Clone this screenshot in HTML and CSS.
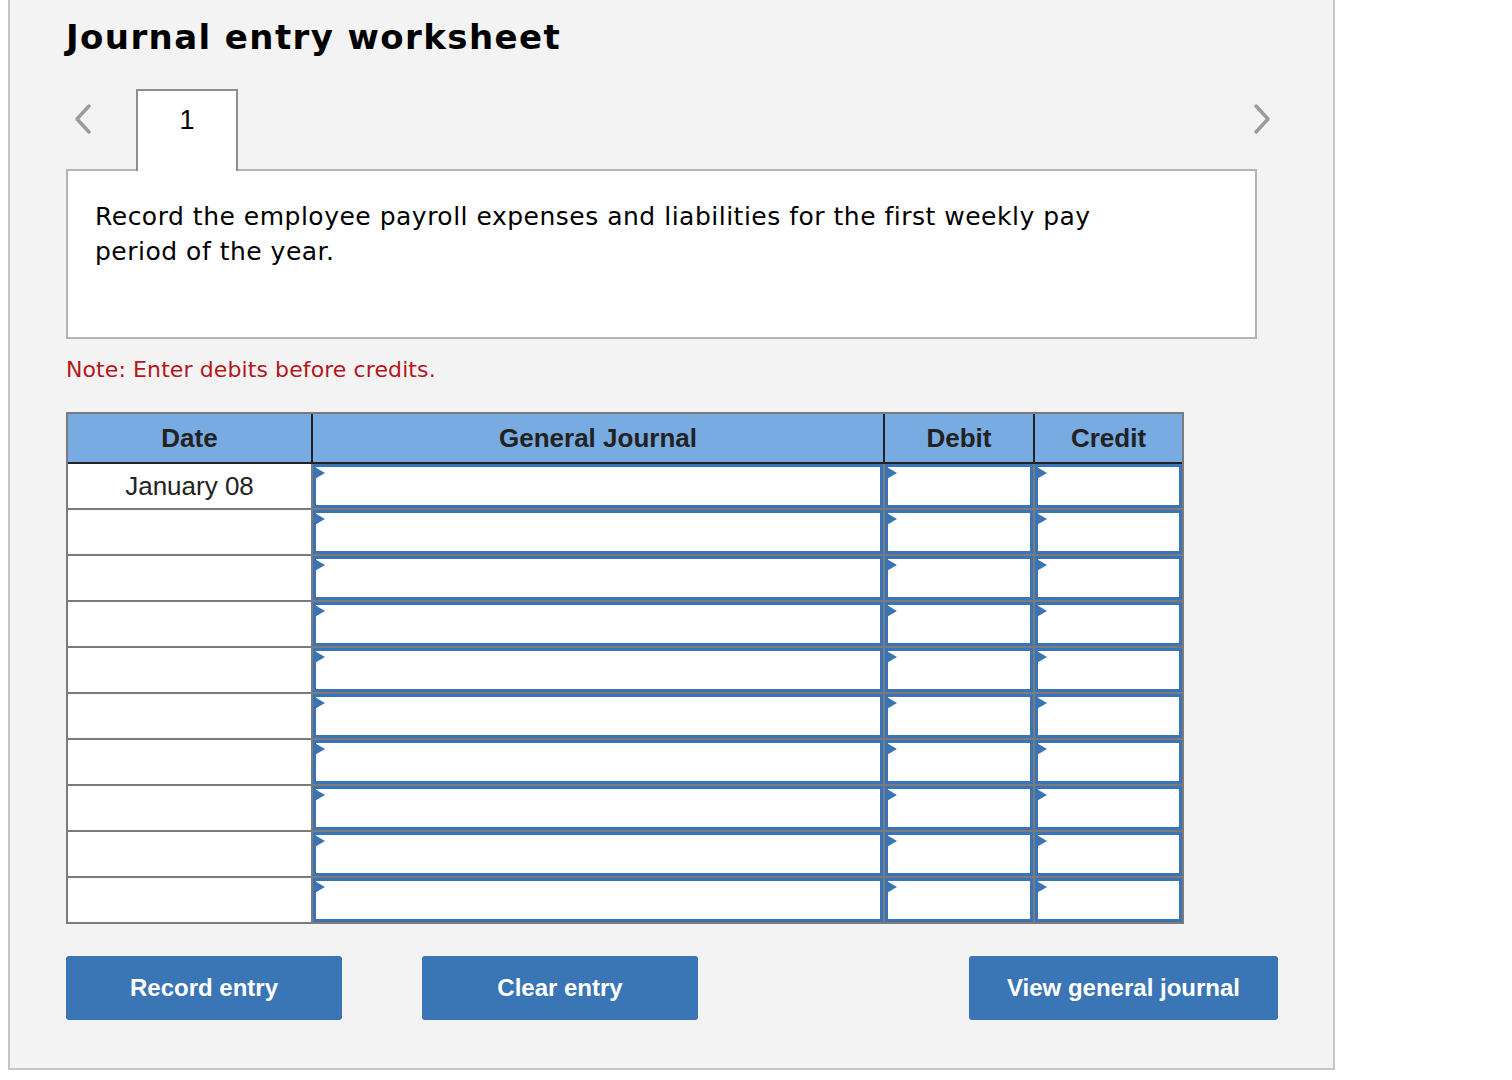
FILE: index.html
```html
<!DOCTYPE html>
<html lang="en">
<head>
<meta charset="utf-8">
<title>Journal entry worksheet</title>
<link rel="stylesheet" href="styles.css">
</head>
<body>
<div class="page">
  <h1 class="title">Journal entry worksheet</h1>
  <div class="nav">
    <div class="arrow arrow-left">
      <svg width="20" height="32" viewBox="0 0 20 32"><path d="M16 3 L4 16 L16 29" fill="none" stroke="#9b9b9b" stroke-width="3.5" stroke-linecap="round" stroke-linejoin="round"/></svg>
    </div>
    <div class="tab">1</div>
    <div class="arrow arrow-right">
      <svg width="20" height="32" viewBox="0 0 20 32"><path d="M4 3 L16 16 L4 29" fill="none" stroke="#9b9b9b" stroke-width="3.5" stroke-linecap="round" stroke-linejoin="round"/></svg>
    </div>
  </div>
  <div class="prompt">
    <p>Record the employee payroll expenses and liabilities for the first weekly pay period of the year.</p>
  </div>
  <p class="note">Note: Enter debits before credits.</p>
  <div class="journal">
    <div class="jhead">
      <div class="hcell">Date</div>
      <div class="hcell">General Journal</div>
      <div class="hcell">Debit</div>
      <div class="hcell">Credit</div>
    </div>
    <div class="jbody">
      <div class="dcell">January 08</div><div class="icell"><div class="field"></div></div><div class="icell"><div class="field"></div></div><div class="icell"><div class="field"></div></div>
      <div class="dcell"></div><div class="icell"><div class="field"></div></div><div class="icell"><div class="field"></div></div><div class="icell"><div class="field"></div></div>
      <div class="dcell"></div><div class="icell"><div class="field"></div></div><div class="icell"><div class="field"></div></div><div class="icell"><div class="field"></div></div>
      <div class="dcell"></div><div class="icell"><div class="field"></div></div><div class="icell"><div class="field"></div></div><div class="icell"><div class="field"></div></div>
      <div class="dcell"></div><div class="icell"><div class="field"></div></div><div class="icell"><div class="field"></div></div><div class="icell"><div class="field"></div></div>
      <div class="dcell"></div><div class="icell"><div class="field"></div></div><div class="icell"><div class="field"></div></div><div class="icell"><div class="field"></div></div>
      <div class="dcell"></div><div class="icell"><div class="field"></div></div><div class="icell"><div class="field"></div></div><div class="icell"><div class="field"></div></div>
      <div class="dcell"></div><div class="icell"><div class="field"></div></div><div class="icell"><div class="field"></div></div><div class="icell"><div class="field"></div></div>
      <div class="dcell"></div><div class="icell"><div class="field"></div></div><div class="icell"><div class="field"></div></div><div class="icell"><div class="field"></div></div>
      <div class="dcell"></div><div class="icell"><div class="field"></div></div><div class="icell"><div class="field"></div></div><div class="icell"><div class="field"></div></div>
    </div>
  </div>
  <div class="actions">
    <button class="btn btn-record">Record entry</button>
    <button class="btn btn-clear">Clear entry</button>
    <button class="btn btn-view">View general journal</button>
  </div>
</div>
</body>
</html>
```
FILE: styles.css
```css
html, body {
  margin: 0;
  padding: 0;
  background: #ffffff;
}
.page {
  margin-left: 8px;
  width: 1267px;
  background: #f3f3f3;
  border: 2px solid #c6c6c6;
  border-top: none;
  padding: 0 0 48px 56px;
  font-family: "DejaVu Sans", Verdana, sans-serif;
  color: #000;
}
.title {
  margin: 0;
  padding-top: 16px;
  font-size: 34px;
  letter-spacing: 1.4px;
  line-height: 42px;
  font-weight: bold;
}
.nav {
  display: flex;
  width: 1206px;
  height: 82px;
  margin-top: 31px;
}
.arrow {
  height: 60px;
  display: flex;
  align-items: center;
}
.arrow-left {
  width: 70px;
  padding-left: 7px;
  box-sizing: border-box;
}
.arrow-right {
  margin-left: auto;
  width: 20px;
}
.tab {
  position: relative;
  z-index: 2;
  width: 98px;
  background: #fff;
  border: 2px solid #8e8e8e;
  border-bottom: none;
  font-family: "Liberation Sans", Arial, sans-serif;
  font-size: 27px;
  text-align: center;
  line-height: 27px;
  padding-top: 16px;
  box-sizing: content-box;
  height: 64px;
}
.prompt {
  width: 1187px;
  height: 166px;
  margin-top: -2px;
  background: #fff;
  border: 2px solid #b4b4b4;
  box-sizing: content-box;
}
.prompt p {
  margin: 0;
  padding: 28px 0 0 27px;
  max-width: 1030px;
  font-size: 25px;
  letter-spacing: 0.5px;
  line-height: 35px;
}
.note {
  margin: 16px 0 0 0;
  font-size: 22px;
  letter-spacing: 0.1px;
  line-height: 30px;
  color: #b3161d;
}
.journal {
  margin-top: 27px;
  width: 1114px;
  border: 2px solid #7b7b7b;
  background: #7b7b7b;
}
.jhead, .jbody {
  display: grid;
  grid-template-columns: 243px 570px 148px 147px;
  column-gap: 2px;
}
.jhead {
  background: #222;
  border-bottom: 2px solid #222;
}
.jbody {
  row-gap: 2px;
  background: #7b7b7b;
}
.hcell {
  height: 48px;
  background: #78abe1;
  font-family: "Liberation Sans", Arial, sans-serif;
  font-weight: bold;
  font-size: 26px;
  color: #222;
  display: flex;
  align-items: center;
  justify-content: center;
}
.dcell {
  height: 44px;
  background: #fff;
  font-family: "Liberation Sans", Arial, sans-serif;
  font-size: 26px;
  color: #222;
  display: flex;
  align-items: center;
  justify-content: center;
}
.icell {
  height: 44px;
  background: #fff;
}
.field {
  position: relative;
  height: 100%;
  box-sizing: border-box;
  border: 3px solid #3a74b5;
  background: #fff;
}
.field::before {
  content: "";
  position: absolute;
  top: -1px;
  left: -3px;
  width: 0;
  height: 0;
  border-top: 7px solid transparent;
  border-bottom: 7px solid transparent;
  border-left: 12px solid #3a74b5;
}
.actions {
  display: flex;
  width: 1212px;
  margin-top: 32px;
}
.btn {
  height: 64px;
  border: none;
  border-radius: 3px;
  background: #3a75b6;
  color: #fff;
  font-family: "Liberation Sans", Arial, sans-serif;
  font-weight: bold;
  font-size: 24px;
  padding: 0;
  cursor: pointer;
}
.btn-record, .btn-clear {
  width: 276px;
}
.btn-clear {
  margin-left: 80px;
}
.btn-view {
  width: 309px;
  margin-left: auto;
}
```
